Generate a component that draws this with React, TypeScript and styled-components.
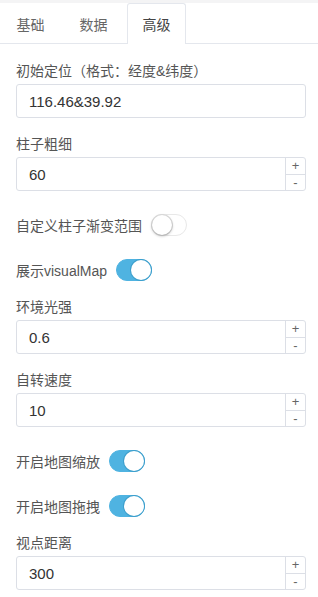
import React, { useState } from "react";
import styled, { createGlobalStyle } from "styled-components";

const Global = createGlobalStyle`
  html, body { margin: 0; padding: 0; background: #fff; }
  body { font-family: "Liberation Sans", "Noto Sans CJK SC", sans-serif; -webkit-font-smoothing: antialiased; }
  * { box-sizing: border-box; }
`;

const Page = styled.div`
  width: 318px;
  min-height: 597px;
  background: #fff;
  border-top: 3px solid #f4f4f5;
`;

const TabBar = styled.div`
  display: flex;
  height: 41px;
  padding-left: 1px;
  gap: 4px;
  border-bottom: 1px solid #e4e7ed;
`;

const Tab = styled.div<{ $active?: boolean }>`
  width: 59px;
  height: ${(p) => (p.$active ? "41px" : "40px")};
  display: flex;
  align-items: center;
  justify-content: center;
  font-size: 14px;
  color: ${(p) => (p.$active ? "#444" : "#666")};
  background: #fff;
  border: 1px solid ${(p) => (p.$active ? "#e4e7ed" : "transparent")};
  border-bottom: none;
  border-radius: 3px 3px 0 0;
  margin-bottom: ${(p) => (p.$active ? "-1px" : "0")};
`;

const Form = styled.div`
  display: flex;
  flex-direction: column;
  padding: 17px 12px 0 16px;
`;

const Field = styled.div`
  display: flex;
  flex-direction: column;
  margin-bottom: 16px;
`;

const Label = styled.div`
  font-size: 14px;
  line-height: 20px;
  height: 20px;
  color: #555;
  margin-bottom: 3px;
  white-space: nowrap;
`;

const InputBox = styled.div`
  display: flex;
  height: 34px;
  border: 1px solid #dcdfe6;
  border-radius: 3px;
  overflow: hidden;
  background: #fff;
`;

const Value = styled.div`
  flex: 1;
  display: flex;
  align-items: center;
  padding-left: 12px;
  font-size: 15px;
  color: #333;
`;

const Spinner = styled.div`
  width: 20px;
  display: flex;
  flex-direction: column;
  border-left: 1px solid #dcdfe6;
`;

const SpinBtn = styled.div<{ $top?: boolean }>`
  flex: 1;
  display: flex;
  align-items: center;
  justify-content: center;
  font-size: 13px;
  line-height: 1;
  color: #666;
  border-bottom: ${(p) => (p.$top ? "1px solid #dcdfe6" : "none")};
`;

const ToggleRow = styled.div`
  display: flex;
  align-items: center;
  height: 24px;
  margin-top: 6px;
  margin-bottom: 15px;
  font-size: 14px;
  color: #555;
`;

const Switch = styled.div<{ $on?: boolean }>`
  position: relative;
  width: 36px;
  height: 22px;
  margin-left: 9px;
  border-radius: 11px;
  background: ${(p) => (p.$on ? "#4fb3e1" : "#fff")};
  border: 1px solid ${(p) => (p.$on ? "#4fb3e1" : "#e8e8e8")};
`;

const Knob = styled.div<{ $on?: boolean }>`
  position: absolute;
  top: 0;
  left: ${(p) => (p.$on ? "14px" : "0")};
  width: 20px;
  height: 20px;
  border-radius: 50%;
  background: #fff;
  box-shadow: ${(p) =>
    p.$on ? "0 0 0 1px #3d9fcc" : "0 1px 3px rgba(0,0,0,0.3), 0 0 0 1px #e0e0e0"};
`;

const NumField = ({ label, value }: { label: string; value: string }) => (
  <Field>
    <Label>{label}</Label>
    <InputBox>
      <Value>{value}</Value>
      <Spinner>
        <SpinBtn $top>+</SpinBtn>
        <SpinBtn>-</SpinBtn>
      </Spinner>
    </InputBox>
  </Field>
);

const Toggle = ({ label, on }: { label: string; on?: boolean }) => (
  <ToggleRow>
    {label}
    <Switch $on={on}>
      <Knob $on={on} />
    </Switch>
  </ToggleRow>
);

export default function App() {
  const [tab] = useState(2);
  const tabs = ["基础", "数据", "高级"];
  return (
    <Page>
      <Global />
      <TabBar>
        {tabs.map((t, i) => (
          <Tab key={t} $active={i === tab}>
            {t}
          </Tab>
        ))}
      </TabBar>
      <Form>
        <Field>
          <Label>初始定位（格式：经度&amp;纬度）</Label>
          <InputBox>
            <Value>116.46&amp;39.92</Value>
          </InputBox>
        </Field>
        <NumField label="柱子粗细" value="60" />
        <Toggle label="自定义柱子渐变范围" />
        <Toggle label="展示visualMap" on />
        <NumField label="环境光强" value="0.6" />
        <NumField label="自转速度" value="10" />
        <Toggle label="开启地图缩放" on />
        <Toggle label="开启地图拖拽" on />
        <NumField label="视点距离" value="300" />
      </Form>
    </Page>
  );
}
